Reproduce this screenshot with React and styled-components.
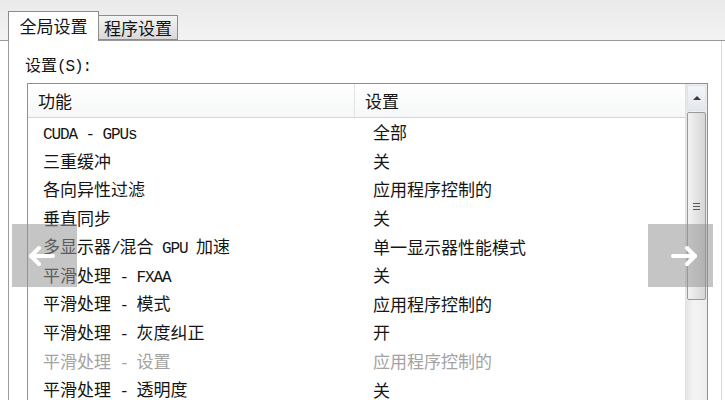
import React from 'react';
import styled, { createGlobalStyle } from 'styled-components';

const GlobalStyle = createGlobalStyle`
  html, body {
    margin: 0;
    padding: 0;
    background: #ffffff;
    overflow: hidden;
  }
`;

const ROWS = [
  { name: 'CUDA - GPUs', value: '全部' },
  { name: '三重缓冲', value: '关' },
  { name: '各向异性过滤', value: '应用程序控制的' },
  { name: '垂直同步', value: '关' },
  { name: '多显示器/混合 GPU 加速', value: '单一显示器性能模式' },
  { name: '平滑处理 - FXAA', value: '关' },
  { name: '平滑处理 - 模式', value: '应用程序控制的' },
  { name: '平滑处理 - 灰度纠正', value: '开' },
  { name: '平滑处理 - 设置', value: '应用程序控制的', disabled: true },
  { name: '平滑处理 - 透明度', value: '关' },
];

const Window = styled.div`
  position: relative;
  width: 725px;
  height: 400px;
  overflow: hidden;
  display: flex;
  flex-direction: column;
  font-family: 'Noto Sans CJK SC', 'Liberation Sans', sans-serif;
  color: #151515;
  background: #ffffff;
`;

// half-width latin runs, like the old bitmap system font
const Latin = styled.span`
  font-family: 'Liberation Mono', 'DejaVu Sans Mono', monospace;
  font-size: 16px;
  letter-spacing: -1.1px;
  line-height: 1;
`;

const Text = ({ children }) =>
  children.split(/([\x20-\x7e]+)/).map((part, i) =>
    /[\x20-\x7e]/.test(part) ? <Latin key={i}>{part}</Latin> : part
  );

const TabStrip = styled.div`
  height: 40px;
  flex: none;
  display: flex;
  align-items: flex-end;
  padding-left: 8px;
  background: linear-gradient(#eaeaea, #f3f3f3);
  border-bottom: 1px solid #989898;
`;

const Tab = styled.div`
  box-sizing: border-box;
  display: flex;
  align-items: center;
  justify-content: center;
  font-size: 17px;
  line-height: 1;
  border: 1px solid #8c8c8c;
  height: ${p => (p.$active ? '30px' : '25px')};
  width: ${p => (p.$active ? '91px' : '79px')};
  margin-bottom: ${p => (p.$active ? '-1px' : '0')};
  border-bottom: ${p => (p.$active ? 'none' : '1px solid #8c8c8c')};
  border-left: ${p => (p.$active ? '1px solid #8c8c8c' : 'none')};
  background: ${p => (p.$active ? '#ffffff' : 'linear-gradient(#f4f4f4, #d9d9d9)')};
  padding-bottom: ${p => (p.$active ? '2px' : '0')};
`;

const Panel = styled.div`
  flex: 1;
  margin-left: 8px;
  margin-right: 3px;
  border-left: 1px solid #9c9c9c;
  border-right: 1px solid #d8d8d8;
  display: flex;
  flex-direction: column;
  min-height: 0;
`;

const Label = styled.div`
  font-size: 16px;
  line-height: 20px;
  margin: 13px 0 0 16px;
`;

const ListView = styled.div`
  box-sizing: border-box;
  margin: 8px 0 0 18px;
  width: 681px;
  flex: 1;
  border: 1px solid #8d9096;
  border-bottom: none;
  display: grid;
  grid-template-columns: 1fr 22px;
  min-height: 0;
`;

const ListBody = styled.div`
  display: flex;
  flex-direction: column;
  min-width: 0;
`;

const HeaderRow = styled.div`
  display: grid;
  grid-template-columns: 327px 1fr;
  height: 33px;
  flex: none;
  background: linear-gradient(#ffffff, #f6f7f8);
  border-bottom: 1px solid #d5d5d5;
`;

const HeaderCell = styled.div`
  display: flex;
  align-items: center;
  padding-left: 10px;
  font-size: 17px;
  border-right: ${p => (p.$divider ? '1px solid #e3e3e3' : 'none')};
`;

const Row = styled.div`
  display: grid;
  grid-template-columns: 327px 1fr;
  height: 28.6px;
  align-items: center;
  font-size: 17px;
  line-height: 20px;
  color: ${p => (p.$disabled ? '#a3a3a3' : '#151515')};
`;

const Cell = styled.div`
  padding-left: ${p => p.$pad}px;
  white-space: pre;
`;

const ScrollBar = styled.div`
  display: flex;
  flex-direction: column;
  gap: 1px;
  padding: 1px 1px 0 1px;
  background: linear-gradient(90deg, #e6e6e6, #f4f4f4 40%, #ececec);
  border-left: 1px solid #e2e2e2;
`;

const ScrollButton = styled.div`
  height: 24px;
  display: flex;
  align-items: center;
  justify-content: center;
  border-radius: 2px;
  background: linear-gradient(#f3f6f9, #e3e8ee);
  border: 1px solid #dfe4ea;
  &::before {
    content: '';
    border-left: 4px solid transparent;
    border-right: 4px solid transparent;
    border-bottom: 4px solid #3a3a3a;
  }
`;

const Thumb = styled.div`
  height: 186px;
  display: flex;
  align-items: center;
  justify-content: center;
  border: 1px solid #9a9a9a;
  border-radius: 2px;
  background: linear-gradient(90deg, #f2f2f2, #e4e4e4 50%, #d6d6d6);
`;

const Grip = styled.div`
  display: flex;
  flex-direction: column;
  gap: 2px;
  span {
    display: block;
    width: 7px;
    height: 1px;
    background: #5a5a5a;
  }
`;

const NavArrow = styled.div`
  position: absolute;
  top: 224px;
  ${p => (p.$side === 'left' ? 'left: 12px;' : 'left: 648px;')}
  width: 65px;
  height: 63px;
  background: rgba(150, 150, 150, 0.55);
  display: flex;
  align-items: center;
  justify-content: ${p => (p.$side === 'left' ? 'flex-start' : 'center')};
  padding-left: ${p => (p.$side === 'left' ? '14px' : '8px')};
  box-sizing: border-box;
`;

const Arrow = ({ dir }) => (
  <svg width="30" height="24" viewBox="0 0 30 24">
    <g
      transform={dir === 'left' ? 'translate(30 0) scale(-1 1)' : undefined}
      fill="none"
      stroke="#ffffff"
      strokeWidth="4"
      strokeLinecap="round"
      strokeLinejoin="round"
    >
      <path d="M3 12 H25" />
      <path d="M17 4 L25 12 L17 20" />
    </g>
  </svg>
);

const App = () => (
  <>
    <GlobalStyle />
    <Window>
      <TabStrip>
        <Tab $active>全局设置</Tab>
        <Tab>程序设置</Tab>
      </TabStrip>
      <Panel>
        <Label>
          <Text>设置(S):</Text>
        </Label>
        <ListView>
          <ListBody>
            <HeaderRow>
              <HeaderCell $divider>功能</HeaderCell>
              <HeaderCell>设置</HeaderCell>
            </HeaderRow>
            <div>
              {ROWS.map(row => (
                <Row key={row.name} $disabled={row.disabled}>
                  <Cell $pad={15}>
                    <Text>{row.name}</Text>
                  </Cell>
                  <Cell $pad={18}>{row.value}</Cell>
                </Row>
              ))}
            </div>
          </ListBody>
          <ScrollBar>
            <ScrollButton />
            <Thumb>
              <Grip>
                <span />
                <span />
                <span />
              </Grip>
            </Thumb>
          </ScrollBar>
        </ListView>
      </Panel>
      <NavArrow $side="left">
        <Arrow dir="left" />
      </NavArrow>
      <NavArrow $side="right">
        <Arrow dir="right" />
      </NavArrow>
    </Window>
  </>
);

export default App;
